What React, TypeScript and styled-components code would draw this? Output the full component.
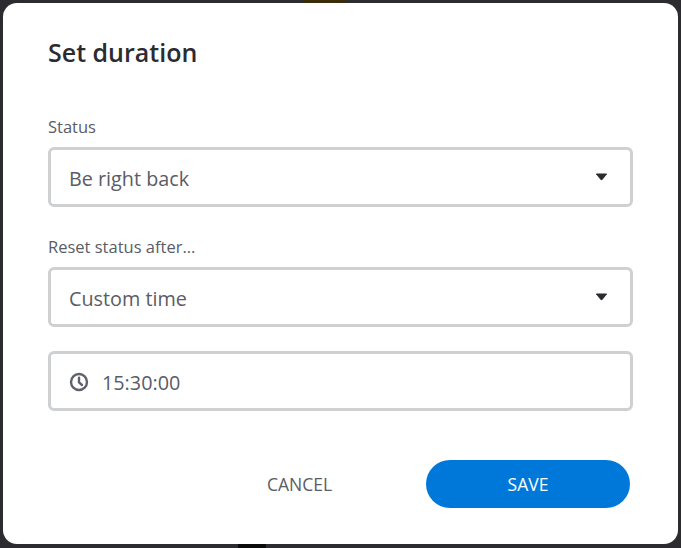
import React from 'react';
import styled, { createGlobalStyle } from 'styled-components';

const GlobalStyle = createGlobalStyle`
  html, body {
    margin: 0;
    height: 100%;
    overflow: hidden;
    background: #2b2b30;
  }
  * {
    box-sizing: border-box;
  }
`;

const Backdrop = styled.div`
  width: 681px;
  height: 548px;
  padding: 3px;
  position: relative;
  overflow: hidden;
  font-family: 'Open Sans', 'Noto Sans', sans-serif;
`;

const BehindTop = styled.div`
  position: absolute;
  top: 0;
  left: 303px;
  width: 43px;
  height: 3px;
  background: #3a2c08;
`;

const BehindAvatar = styled.div`
  position: absolute;
  top: 536px;
  left: 238px;
  width: 28px;
  height: 20px;
  border-radius: 50%;
  background: #0a0a0a;
`;

const Dialog = styled.div`
  position: relative;
  z-index: 1;
  width: 675px;
  height: 541px;
  padding: 29px 45px 0;
  background: #fff;
  border-radius: 14px;
  display: flex;
  flex-direction: column;
`;

const Title = styled.h2`
  margin: 0 0 44px;
  font-size: 25px;
  line-height: 40px;
  font-weight: 600;
  color: #2b2b30;
`;

const Field = styled.div`
  display: flex;
  flex-direction: column;
  margin-bottom: ${(p: { $gap: number }) => p.$gap}px;
`;

const Label = styled.label`
  font-size: 16.5px;
  line-height: 22px;
  margin-bottom: 9px;
  color: #5a5c66;
`;

const Box = styled.div`
  height: 60px;
  padding: 2px 22px 0 18px;
  border: 3px solid #cfd0d2;
  border-radius: 6px;
  display: flex;
  align-items: center;
  justify-content: space-between;
  font-size: 19.8px;
  color: #5a5c66;
`;

const Caret = styled.svg`
  width: 13px;
  height: 8px;
  margin-top: -3px;
  display: block;
  fill: #2b2b30;
`;

const TimeValue = styled.div`
  display: flex;
  align-items: center;
  gap: 13px;
`;

const ClockIcon = styled.svg`
  width: 20px;
  height: 20px;
  display: block;
  fill: none;
  stroke: #5f616b;
  stroke-width: 2.4;
  stroke-linecap: round;
  stroke-linejoin: round;
`;

const Actions = styled.div`
  display: flex;
  align-items: center;
  justify-content: flex-end;
  margin-top: 9px;
  padding-right: 3px;
`;

const CancelButton = styled.button`
  width: 253px;
  height: 48px;
  border: 0;
  background: none;
  font: inherit;
  font-size: 17.5px;
  color: #5a5c66;
`;

const SaveButton = styled.button`
  width: 204px;
  height: 48px;
  border: 0;
  border-radius: 24px;
  background: #0078d9;
  font: inherit;
  font-size: 17.5px;
  color: #fff;
`;

const ArrowDown = () => (
  <Caret viewBox="0 0 14 9">
    <path d="M1 1.5 Q0.6 0.5 2 0.5 H12 Q13.4 0.5 13 1.5 L8 7.6 Q7 8.6 6 7.6 Z" />
  </Caret>
);

const Clock = () => (
  <ClockIcon viewBox="0 0 20 20">
    <circle cx="10" cy="10" r="8" />
    <path d="M10 5.6 V10.4 L13 13" />
  </ClockIcon>
);

const App = () => {
  return (
    <Backdrop>
      <GlobalStyle />
      <BehindTop />
      <BehindAvatar />
      <Dialog>
        <Title>Set duration</Title>
        <Field $gap={29}>
          <Label>Status</Label>
          <Box>
            Be right back
            <ArrowDown />
          </Box>
        </Field>
        <Field $gap={24}>
          <Label>Reset status after...</Label>
          <Box>
            Custom time
            <ArrowDown />
          </Box>
        </Field>
        <Field $gap={40}>
          <Box>
            <TimeValue>
              <Clock />
              15:30:00
            </TimeValue>
          </Box>
        </Field>
        <Actions>
          <CancelButton>CANCEL</CancelButton>
          <SaveButton>SAVE</SaveButton>
        </Actions>
      </Dialog>
    </Backdrop>
  );
};

export default App;
